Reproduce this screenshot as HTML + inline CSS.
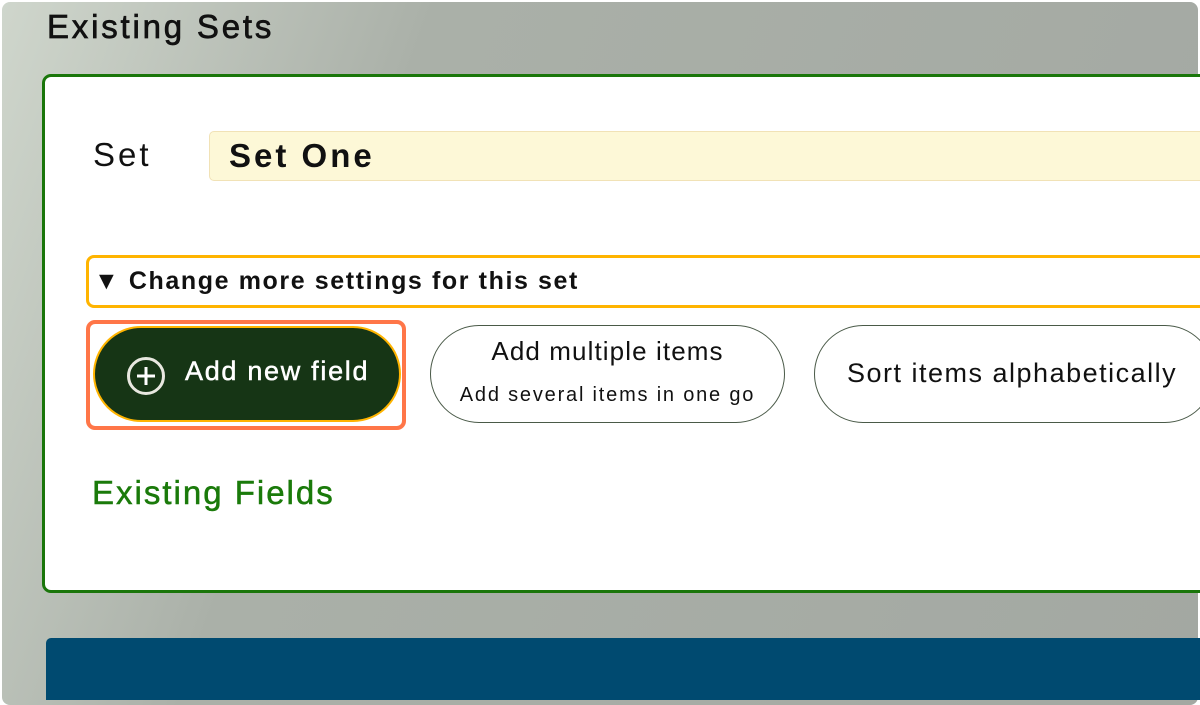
<!DOCTYPE html>
<html><head><style>
*{margin:0;padding:0;box-sizing:border-box}
body{width:1200px;height:705px;overflow:hidden;font-family:"Liberation Sans",sans-serif;background:#fff;position:relative}
.bg{position:absolute;left:2px;top:2px;width:1196px;height:703px;border-radius:8px;background:linear-gradient(110deg,#cfd6cc 0%,#aab0a8 30%,#a3a8a2 100%)}
h1{position:absolute;left:47px;top:8px;font-size:33px;font-weight:normal;color:#111;letter-spacing:2.8px;-webkit-text-stroke:0.7px #111}
.card{position:absolute;left:42px;top:74px;width:1170px;height:519px;background:#fff;border:3px solid #1a760a;border-radius:9px}
.lbl{position:absolute;left:93px;top:136px;font-size:33px;color:#111;letter-spacing:3px}
.inp{position:absolute;left:209px;top:131px;width:1000px;height:50px;background:#fdf8d7;border:1px solid #f1e2b6;border-radius:5px}
.inp span{position:absolute;left:19px;top:5px;font-size:33px;font-weight:bold;color:#111;letter-spacing:3px}
.sum{position:absolute;left:86px;top:255px;width:1130px;height:53px;border:3px solid #ffb400;border-radius:8px}
.sum span{position:absolute;left:5px;top:9px;font-size:25px;font-weight:bold;color:#111;letter-spacing:1.6px}
.hl{position:absolute;left:86px;top:320px;width:320px;height:110px;border:4px solid #ff7648;border-radius:9px}
.b1{position:absolute;left:93px;top:326px;width:308px;height:96px;background:#163515;border:2px solid #ffb400;border-radius:48px;color:#fff}
.b1 .t{position:absolute;left:90px;top:28px;font-size:27px;letter-spacing:1.7px;-webkit-text-stroke:0.5px #fff}
.b1 svg{position:absolute;left:31px;top:28px}
.b2{position:absolute;left:430px;top:325px;width:355px;height:98px;border:1.5px solid #4a5a48;border-radius:49px;text-align:center;color:#111}
.b2 .a{position:absolute;left:0;right:0;top:10px;font-size:26px;letter-spacing:1.1px}
.b2 .b{position:absolute;left:0;right:0;top:58px;font-size:20px;letter-spacing:1.8px}
.b3{position:absolute;left:814px;top:325px;width:400px;height:98px;border:1.5px solid #4a5a48;border-radius:49px;color:#111}
.b3 span{position:absolute;left:32px;top:32px;font-size:27px;letter-spacing:1.5px}
.ef{position:absolute;left:92px;top:474px;font-size:33px;color:#1a7a0a;letter-spacing:2px;-webkit-text-stroke:0.5px #1a7a0a}
.bar{position:absolute;left:46px;top:638px;width:1160px;height:62px;background:#004a70;border-radius:5px 5px 0 0}
</style></head><body>
<div class="bg"></div>
<h1>Existing Sets</h1>
<div class="card"></div>
<div class="lbl">Set</div>
<div class="inp"><span>Set One</span></div>
<div class="sum"><span>▼ Change more settings for this set</span></div>
<div class="hl"></div>
<div class="b1"><svg width="40" height="40" viewBox="0 0 40 40"><circle cx="20" cy="20" r="17.5" fill="none" stroke="#e8e8e0" stroke-width="3"/><path d="M20 11v18M11 20h18" stroke="#fff" stroke-width="3"/></svg><span class="t">Add new field</span></div>
<div class="b2"><div class="a">Add multiple items</div><div class="b">Add several items in one go</div></div>
<div class="b3"><span>Sort items alphabetically</span></div>
<div class="ef">Existing Fields</div>
<div class="bar"></div>
</body></html>
